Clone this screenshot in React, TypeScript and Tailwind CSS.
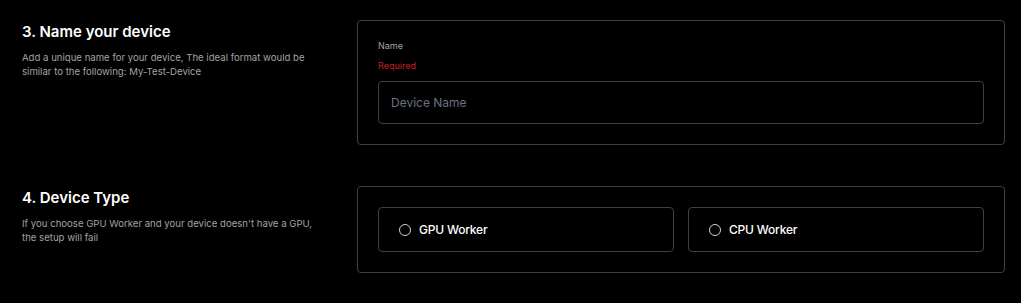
import { useState } from "react";

function SectionInfo({ title, description }: { title: string; description: string }) {
  return (
    <div>
      <h2 className="text-[15px] leading-[24px] font-semibold text-white">{title}</h2>
      <p className="mt-[7px] text-[9.6px] leading-[14px] text-[#a3a3a3]">{description}</p>
    </div>
  );
}

export default function App() {
  const [name, setName] = useState("");
  const [type, setType] = useState<string | null>(null);

  return (
    <div
      className="w-[1021px] h-[303px] bg-black pt-[20px] pl-[22px] pr-[16px]"
      style={{ fontFamily: "Inter, 'Noto Sans', sans-serif" }}
    >
      {/* Name your device */}
      <div className="grid grid-cols-[300px_1fr] gap-[35px]">
        <SectionInfo
          title="3. Name your device"
          description="Add a unique name for your device, The ideal format would be similar to the following: My-Test-Device"
        />
        <div className="h-[125px] rounded-[4px] border border-[#404040] px-[20px] pt-[19px]">
          <label className="block text-[9px] leading-[12px] text-[#a3a3a3]">Name</label>
          <p className="mt-[8px] text-[9px] leading-[12px] text-[#c81e1e]">Required</p>
          <input
            value={name}
            onChange={(e) => setName(e.target.value)}
            placeholder="Device Name"
            className="mt-[9px] block w-full h-[43px] rounded-[4px] border border-[#404040] bg-black px-[12px] text-[12px] text-white placeholder:text-[#6b7280] outline-none"
          />
        </div>
      </div>

      {/* Device type */}
      <div className="mt-[41px] grid grid-cols-[300px_1fr] gap-[35px]">
        <SectionInfo
          title="4. Device Type"
          description="If you choose GPU Worker and your device doesn't have a GPU, the setup will fail"
        />
        <div className="h-[87px] rounded-[4px] border border-[#404040] p-[20px] grid grid-cols-2 gap-[14px]">
          {["GPU Worker", "CPU Worker"].map((opt) => (
            <button
              key={opt}
              onClick={() => setType(opt)}
              className="h-[45px] flex items-center gap-[8px] rounded-[4px] border border-[#404040] px-[20px] text-left"
            >
              <span className="w-[12px] h-[12px] rounded-full border border-[#d4d4d4] flex items-center justify-center">
                {type === opt && <span className="w-[6px] h-[6px] rounded-full bg-white" />}
              </span>
              <span className="text-[12px] font-medium tracking-[-0.2px] text-white">{opt}</span>
            </button>
          ))}
        </div>
      </div>
    </div>
  );
}
